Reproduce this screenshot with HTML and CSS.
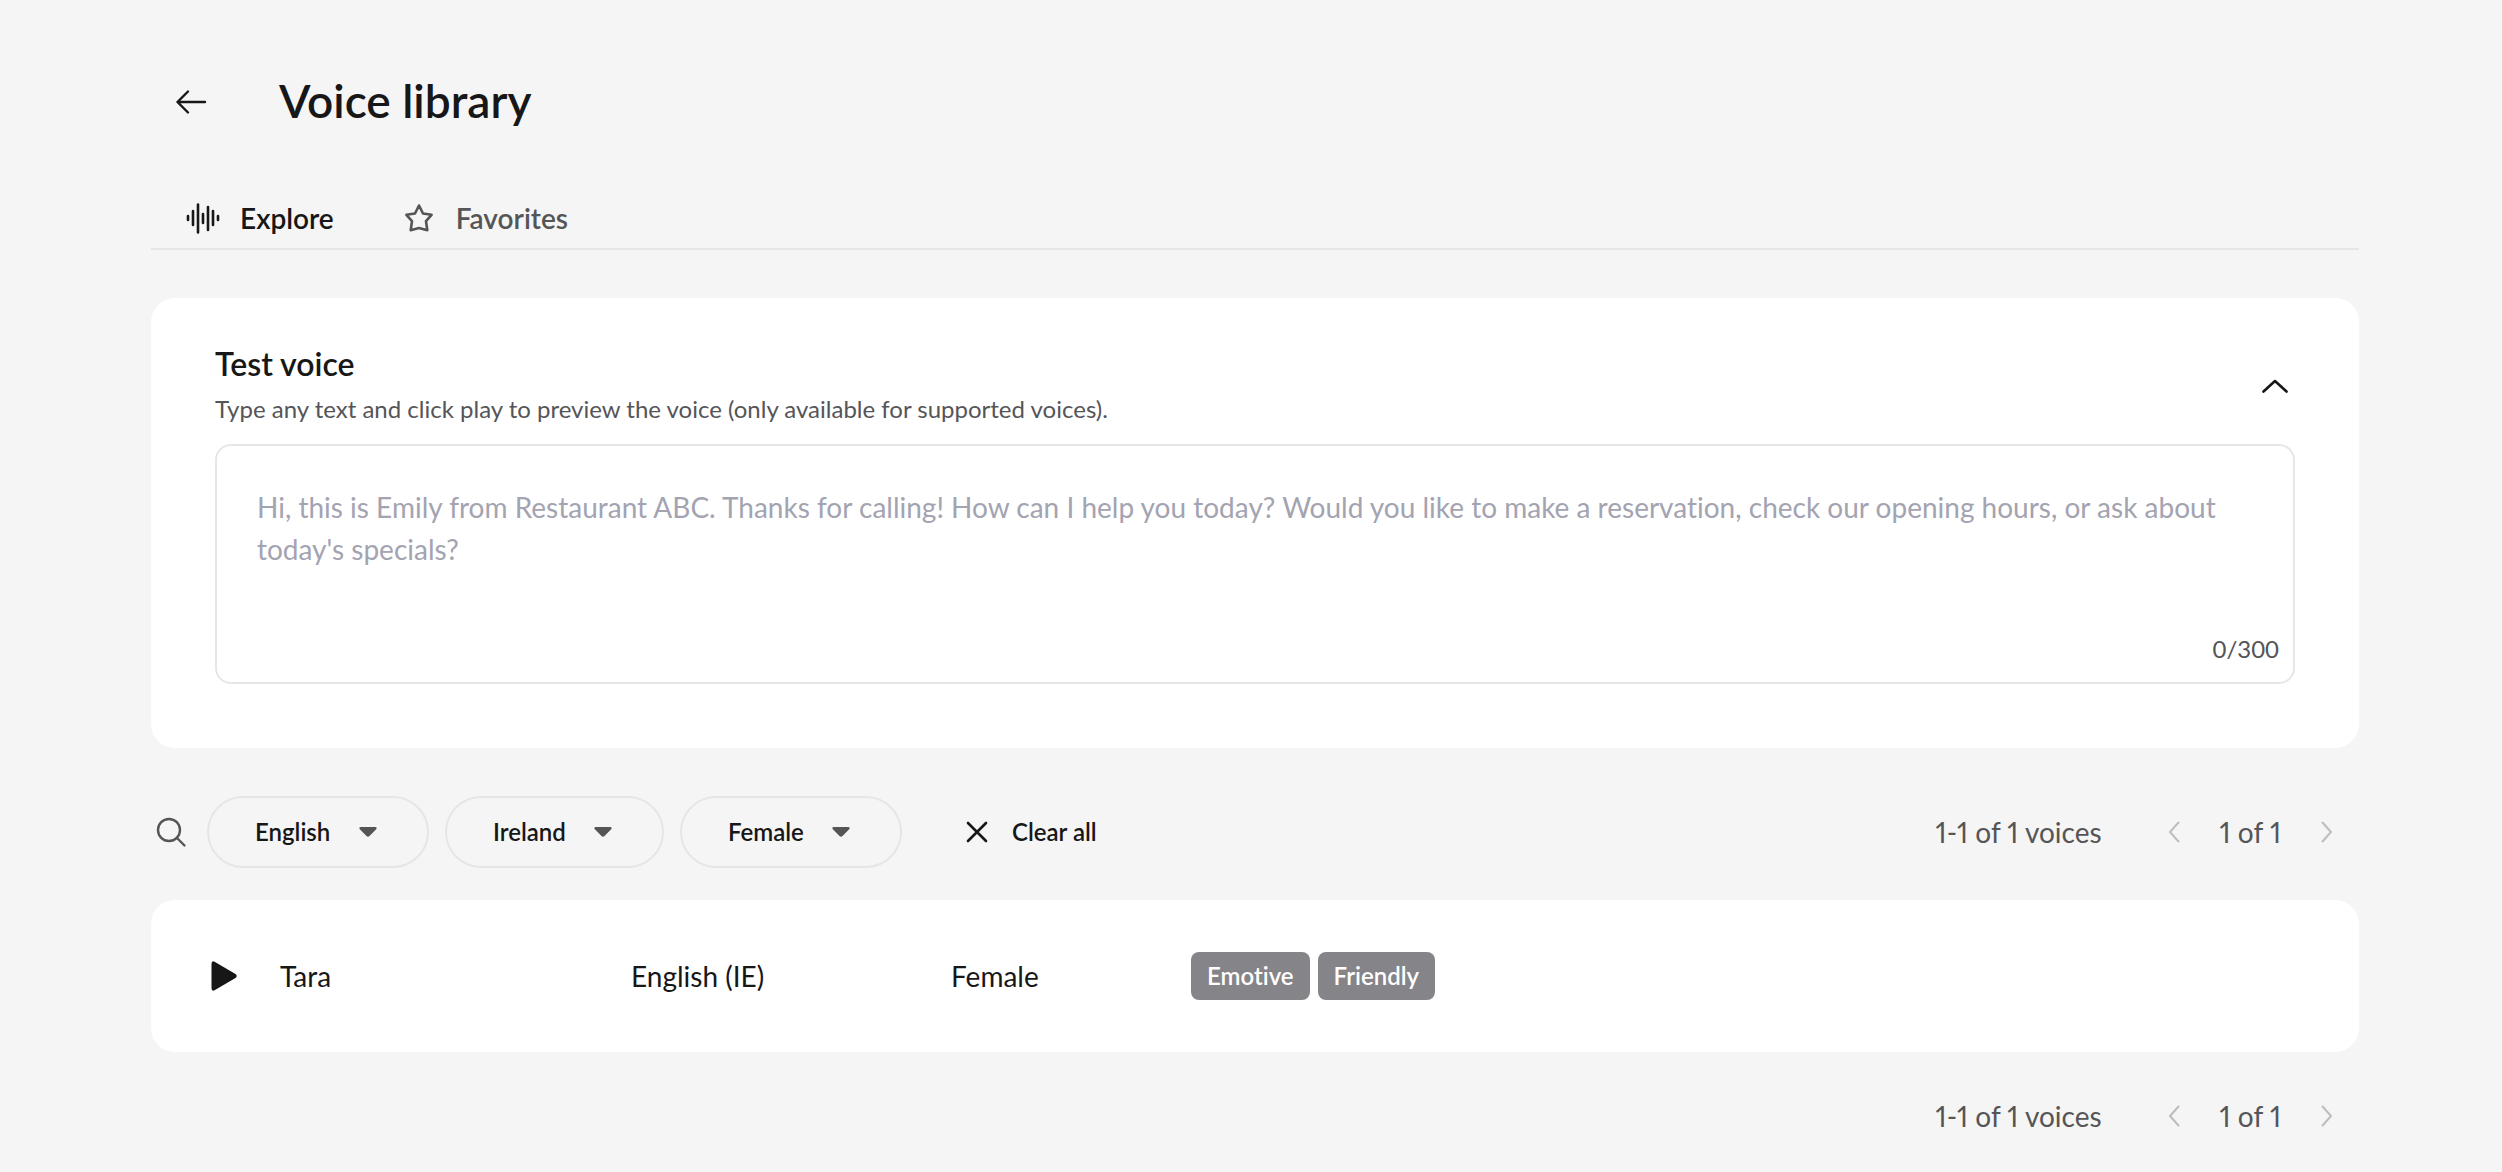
FILE: index.html
```
<!DOCTYPE html>
<html lang="en">
<head>
  <meta charset="UTF-8" />
  <meta name="viewport" content="width=device-width, initial-scale=1.0" />
  <title>Voice library</title>
  <link rel="stylesheet" href="styles.css">
</head>
<body>
  <main class="page">
    <header class="page-header">
      <button class="icon-btn" type="button" aria-label="Back">
        <svg width="32" height="32" viewBox="0 0 32 32" fill="none" stroke="currentColor" stroke-width="2.4" stroke-linecap="round" stroke-linejoin="round"><path d="M30 17H2.500M13 6.500 2.500 17 13 27.500"/></svg>
      </button>
      <h1>Voice library</h1>
    </header>

    <nav class="tabs">
      <a class="tab active" href="#explore">
        <svg width="34" height="34" viewBox="0 0 34 34" fill="none" stroke="currentColor" stroke-width="2.6" stroke-linecap="round"><path d="M2 15v4M7 10v14M12 3.500v28M17 13v9M22 6v23M27 10v14M32 15v4"/></svg>
        Explore
      </a>
      <a class="tab" href="#favorites">
        <svg width="34" height="34" viewBox="0 0 34 34" fill="none" stroke="currentColor" stroke-width="2.6" stroke-linejoin="round"><path d="M17 4.500l4 8 8.600 1.300-5.600 6.400 1.300 9L17 27l-8.300 2.200 1.300-9-5.600-6.400L13 12.500z"/></svg>
        Favorites
      </a>
    </nav>

    <section class="card test-voice">
      <div class="test-header">
        <div>
          <h2>Test voice</h2>
          <label class="hint" for="testText">Type any text and click play to preview the voice (only available for supported voices).</label>
        </div>
        <button class="icon-btn" type="button" aria-label="Collapse">
          <svg width="32" height="32" viewBox="0 0 32 32" fill="none" stroke="currentColor" stroke-width="2.600" stroke-linecap="round" stroke-linejoin="round"><path d="M4.500 22.500 16 12l11.500 10.500"/></svg>
        </button>
      </div>
      <div class="text-box">
        <textarea id="testText" maxlength="300" placeholder="Hi, this is Emily from Restaurant ABC. Thanks for calling! How can I help you today? Would you like to make a reservation, check our opening hours, or ask about today's specials?"></textarea>
        <span class="counter">0/300</span>
      </div>
    </section>

    <div class="toolbar">
      <div class="filters">
        <button class="icon-btn search" type="button" aria-label="Search">
          <svg width="32" height="32" viewBox="0 0 32 32" fill="none" stroke="currentColor" stroke-width="2.400" stroke-linecap="round"><circle cx="14" cy="14" r="11"/><path d="M22 22l7.500 7.500"/></svg>
        </button>
        <label class="pill">
          <select aria-label="Language"><option>English</option></select>
          <svg width="18" height="12" viewBox="0 0 18 12" fill="currentColor"><path d="M1.500 1h15q2 .5.7 2.300l-6.700 6.700q-1.500 1.500-3 0L.8 3.300Q-.5 1.500 1.500 1z"/></svg>
        </label>
        <label class="pill">
          <select aria-label="Country"><option>Ireland</option></select>
          <svg width="18" height="12" viewBox="0 0 18 12" fill="currentColor"><path d="M1.500 1h15q2 .5.7 2.300l-6.700 6.700q-1.500 1.500-3 0L.8 3.300Q-.5 1.500 1.500 1z"/></svg>
        </label>
        <label class="pill">
          <select aria-label="Gender"><option>Female</option></select>
          <svg width="18" height="12" viewBox="0 0 18 12" fill="currentColor"><path d="M1.500 1h15q2 .5.7 2.300l-6.700 6.700q-1.500 1.500-3 0L.8 3.300Q-.5 1.500 1.500 1z"/></svg>
        </label>
        <button class="clear-btn" type="button">
          <svg width="22" height="22" viewBox="0 0 22 22" fill="none" stroke="currentColor" stroke-width="2.600" stroke-linecap="round"><path d="M2 2l18 18M20 2 2 20"/></svg>
          Clear all
        </button>
      </div>
      <div class="pager">
        <span class="range">1-1 of 1 voices</span>
        <button type="button" aria-label="Previous page" disabled>
          <svg width="12" height="22" viewBox="0 0 12 22" fill="none" stroke="currentColor" stroke-width="2" stroke-linecap="round" stroke-linejoin="round"><path d="M10.500 1.500 2 11l8.500 9.500"/></svg>
        </button>
        <span class="current">1 of 1</span>
        <button type="button" aria-label="Next page" disabled>
          <svg width="12" height="22" viewBox="0 0 12 22" fill="none" stroke="currentColor" stroke-width="2" stroke-linecap="round" stroke-linejoin="round"><path d="M1.500 1.500 10 11l-8.500 9.500"/></svg>
        </button>
      </div>
    </div>

    <table class="card voices">
      <tbody>
        <tr>
          <td class="col-play">
            <button class="play-btn" type="button" aria-label="Play Tara">
              <svg width="32" height="32" viewBox="0 0 32 32" fill="currentColor"><path d="M3.500 4q0-4 3.500-2l20.500 12q2.500 2 0 4L7 30Q3.500 32 3.500 28z"/></svg>
            </button>
          </td>
          <td class="col-name">Tara</td>
          <td class="col-language">English (IE)</td>
          <td class="col-gender">Female</td>
          <td>
            <div class="tags">
              <span class="tag">Emotive</span>
              <span class="tag">Friendly</span>
            </div>
          </td>
        </tr>
      </tbody>
    </table>

    <div class="toolbar bottom">
      <div class="pager">
        <span class="range">1-1 of 1 voices</span>
        <button type="button" aria-label="Previous page" disabled>
          <svg width="12" height="22" viewBox="0 0 12 22" fill="none" stroke="currentColor" stroke-width="2" stroke-linecap="round" stroke-linejoin="round"><path d="M10.500 1.500 2 11l8.500 9.500"/></svg>
        </button>
        <span class="current">1 of 1</span>
        <button type="button" aria-label="Next page" disabled>
          <svg width="12" height="22" viewBox="0 0 12 22" fill="none" stroke="currentColor" stroke-width="2" stroke-linecap="round" stroke-linejoin="round"><path d="M1.500 1.500 10 11l-8.500 9.500"/></svg>
        </button>
      </div>
    </div>
  </main>
</body>
</html>
```
FILE: styles.css
```
* {
  margin: 0;
  padding: 0;
  box-sizing: border-box;
}

body {
  background-color: #f5f5f5;
  color: #171717;
  font-family: 'Lato', sans-serif;
  font-size: 28px;
  line-height: 42px;
  font-variant-ligatures: none;
}

button,
select,
textarea {
  font: inherit;
  font-variant-ligatures: none;
  color: inherit;
  background: none;
  border: none;
}

button {
  cursor: pointer;
}

svg {
  display: block;
  flex-shrink: 0;
}

.page {
  padding: 70px 143px 36px 151px;
}

.page-header {
  display: flex;
  align-items: center;
  gap: 48px;
}

.page-header h1 {
  font-size: 46px;
  line-height: 62px;
  font-weight: 600;
}

.icon-btn {
  padding: 24px;
  margin: -24px 0;
}

.tabs {
  display: flex;
  gap: 68px;
  margin-top: 64px;
  padding: 0 35px 8px;
  border-bottom: 2px solid #e6e6e6;
}

.tab {
  display: flex;
  align-items: center;
  gap: 20px;
  height: 44px;
  color: #555558;
  font-weight: 600;
  text-decoration: none;
}

.tab.active {
  color: #171717;
}

.card {
  background: #fff;
  border-radius: 24px;
}

.test-voice {
  margin-top: 48px;
  padding: 42px 64px 64px;
}

.test-header {
  display: flex;
  justify-content: space-between;
  align-items: center;
  margin-bottom: 14px;
}

.test-header .icon-btn {
  padding: 4px;
  margin: 0;
}

.test-header h2 {
  font-size: 32px;
  line-height: 48px;
  font-weight: 600;
}

.hint {
  display: block;
  font-size: 24px;
  color: #555558;
}

.text-box {
  position: relative;
}

.text-box textarea {
  display: block;
  width: 100%;
  height: 240px;
  padding: 40px;
  border: 2px solid #e6e6e6;
  border-radius: 16px;
  resize: none;
}

.text-box textarea::placeholder {
  color: #a3a3b1;
  opacity: 1;
}

.counter {
  position: absolute;
  right: 16px;
  bottom: 14px;
  font-size: 24px;
  color: #555558;
}

.toolbar {
  display: flex;
  justify-content: space-between;
  align-items: center;
  margin: 48px 0 32px;
}

.toolbar.bottom {
  justify-content: flex-end;
  margin: 43px 0 0;
}

.filters {
  display: flex;
  align-items: center;
  gap: 16px;
  font-size: 24px;
  font-weight: 600;
}

.search {
  padding: 4px;
  margin: 0;
  color: #555558;
}

.pill {
  display: flex;
  align-items: center;
  gap: 28px;
  height: 72px;
  padding: 0 50px 0 46px;
  border: 2px solid #e6e6e6;
  border-radius: 36px;
}

.pill select {
  appearance: none;
}

.pill svg {
  color: #555558;
}

.clear-btn {
  display: flex;
  align-items: center;
  gap: 24px;
  padding: 0 48px;
}

.pager {
  display: flex;
  align-items: center;
  padding-right: 26px;
  color: #555558;
  font-variant-numeric: proportional-nums;
}

.pager .range {
  margin-right: 66px;
}

.pager button {
  color: #bdbdbf;
}

.pager .current {
  margin: 0 40px;
}

.voices {
  width: 100%;
  height: 152px;
  border-collapse: collapse;
  table-layout: fixed;
}

.col-play {
  width: 129px;
  padding-left: 57px;
}

.play-btn {
  display: block;
}

.col-name {
  width: 351px;
}

.col-language {
  width: 320px;
}

.col-gender {
  width: 240px;
}

.tags {
  display: flex;
  gap: 8px;
}

.tag {
  padding: 3px 16px;
  border-radius: 8px;
  background: #858489;
  color: #fff;
  font-size: 24px;
  font-weight: 600;
}
```
